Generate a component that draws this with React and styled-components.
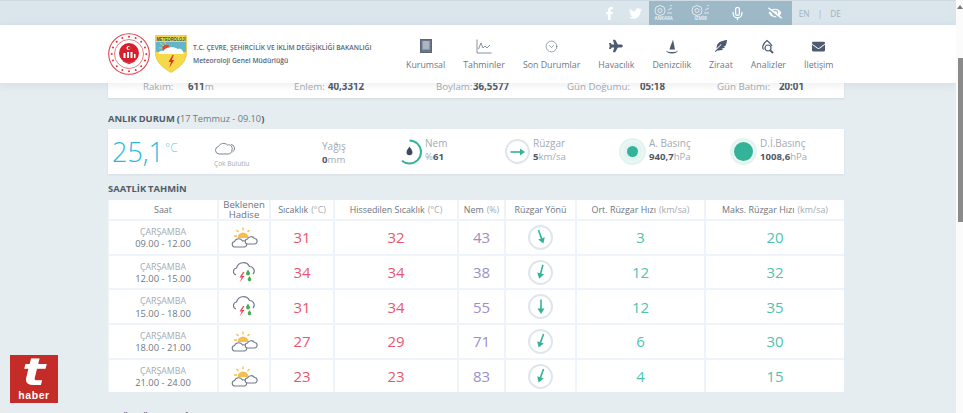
import React from "react";
import styled, { createGlobalStyle } from "styled-components";
import { FaFacebookF, FaTwitter, FaEyeSlash, FaPlane, FaEnvelope, FaFeatherAlt } from "react-icons/fa";
import { Mic, CircleChevronDown } from "lucide-react";

const GlobalStyle = createGlobalStyle`
    html, body {
        margin: 0;
        height: 413px;
        overflow: hidden;
        background: #e6edf1;
        font-family: "Open Sans", "Liberation Sans", sans-serif;
    }
    * { box-sizing: border-box; }
`;

const Page = styled.div`
    display: flex;
    width: 963px;
    height: 413px;
    overflow: hidden;
`;

const Main = styled.div`
    width: 956px;
    height: 413px;
    overflow: hidden;
`;

const ScrollTrack = styled.div`
    width: 7px;
    height: 413px;
    background: #fbfbfb;
    display: flex;
    flex-direction: column;
    align-items: flex-end;
    padding-top: 5px;
`;

const ScrollArrow = styled.div`
    width: 0;
    height: 0;
    border-left: 3px solid transparent;
    border-right: 3px solid transparent;
    border-bottom: 4px solid #777;
`;

const ScrollThumb = styled.div`
    width: 5px;
    height: 164px;
    margin-top: 49px;
    background: #8a8a8a;
`;

const TopBar = styled.div`
    height: 25px;
    background: #dae5ec;
    border-top: 1px solid #cfdbe3;
    display: flex;
    justify-content: flex-end;
    align-items: stretch;
    padding-right: 115px;
`;

const Socials = styled.div`
    display: flex;
    align-items: center;
    gap: 11px;
    margin-right: 6px;
    color: #fff;
    font-size: 13px;
`;

const SocialIcon = styled.span`
    width: 15px;
    display: flex;
    justify-content: center;
`;

const ToolBlock = styled.div`
    width: 143px;
    background: #9db8c7;
    display: flex;
    align-items: center;
    gap: 13px;
    padding: 0 5px 0 3px;
`;

const Tool = styled.div`
    width: 24px;
    display: flex;
    flex-direction: column;
    align-items: center;
    color: #fff;
    font-size: 14px;
`;

const CityName = styled.span`
    font-size: 4.5px;
    line-height: 5px;
    color: #f1f6f8;
    font-weight: 600;
`;

const Lang = styled.div`
    margin-left: 7px;
    display: flex;
    align-items: center;
    gap: 8px;
    font-size: 8.4px;
    color: #a3b2bb;
`;

const Header = styled.header`
    position: relative;
    z-index: 2;
    height: 58px;
    background: #fff;
    box-shadow: 0 2px 8px rgba(90, 110, 125, 0.12);
    display: flex;
    padding-left: 108px;
`;

const Logos = styled.div`
    width: 298px;
    display: flex;
    align-items: center;
    gap: 5px;
`;

const Brand = styled.div`
    margin-left: 1px;
    display: flex;
    flex-direction: column;
    gap: 4px;
    color: #5a6472;
    font-size: 6.7px;
    line-height: 9px;
    font-weight: 600;
    white-space: nowrap;
`;

const Nav = styled.nav`
    display: flex;
    gap: 18px;
`;

const NavItem = styled.div`
    display: flex;
    flex-direction: column;
    align-items: center;
    padding-top: 12px;
    color: #4d5a70;
    font-size: 18px;
`;

const NavIcon = styled.div`
    height: 18px;
    display: flex;
    align-items: center;
    justify-content: center;
`;

const NavLabel = styled.span`
    margin-top: 3px;
    font-size: 8.8px;
    line-height: 14px;
    color: #6e7884;
    white-space: nowrap;
`;

const Content = styled.main`
    width: 736px;
    margin-left: 108px;
`;

const InfoCard = styled.div`
    height: 25px;
    margin-top: -10px;
    padding: 9px 0 0 35px;
    background: #fff;
    box-shadow: 0 1px 2px rgba(120, 140, 155, 0.2);
    display: grid;
    grid-template-columns: 151px 142px 131px 150px auto;
    align-items: start;
`;

const InfoItem = styled.div`
    display: flex;
    font-size: 9.7px;
    line-height: 10px;
    color: #a3abb3;
    white-space: nowrap;
`;

const InfoLabel = styled.span`
    width: ${props => props.$width}px;
`;

const Strong = styled.b`
    font-weight: 700;
    color: #4f5965;
`;

const Heading = styled.h2`
    margin: ${props => props.$top}px 0 0;
    height: 12px;
    font-size: 9.4px;
    line-height: 12px;
    font-weight: 700;
    word-spacing: -0.5px;
    color: #4f5c6a;
    white-space: nowrap;
`;

const Faint = styled.span`
    font-size: 9.2px;
    font-weight: 400;
    word-spacing: 0;
    color: #6d7985;
`;

const NowCard = styled.section`
    height: 45px;
    margin-top: 4px;
    background: #fff;
    box-shadow: 0 1px 2px rgba(120, 140, 155, 0.15);
    display: grid;
    grid-template-columns: 102px 108px 75px 108px 114px 111px auto;
    padding-left: 4px;
    align-items: center;
`;

const TempBlock = styled.div`
    display: flex;
    align-items: flex-start;
    color: #2cb8da;
`;

const TempValue = styled.span`
    font-size: 27px;
    line-height: 32px;
    font-weight: 300;
`;

const TempUnit = styled.span`
    margin: 5px 0 0 1px;
    font-size: 12px;
    line-height: 14px;
    font-weight: 300;
    color: #6ccde3;
`;

const SkyBlock = styled.div`
    display: flex;
    flex-direction: column;
    align-items: flex-start;
    gap: 3px;
    padding-top: 7px;
`;

const SkyLabel = styled.span`
    font-size: 6.6px;
    line-height: 10px;
    color: #a3abb3;
    white-space: nowrap;
`;

const Stat = styled.div`
    display: flex;
    align-items: center;
    gap: 3px;
`;

const StatText = styled.div`
    display: flex;
    flex-direction: column;
    margin-top: ${props => props.$shift || -3}px;
    font-size: 9.6px;
    line-height: 13px;
    color: #a3abb3;
    white-space: nowrap;
`;

const StatName = styled.span`
    font-size: 10px;
`;

const Forecast = styled.div`
    margin-top: 5px;
    display: grid;
    grid-template-columns: 108px 50px 62px 122px 45px 69px 127px 1fr;
    grid-template-rows: 19px repeat(5, 32.7px);
    gap: 2px;
    padding-left: 1px;
    background: #eef4f9;
`;

const HeadCell = styled.div`
    background: #fff;
    display: flex;
    align-items: center;
    justify-content: center;
    text-align: center;
    font-size: ${props => props.$size || 8.9}px;
    line-height: 9.3px;
    color: #6b7580;
    white-space: nowrap;
`;

const Unit = styled.span`
    margin-left: 3px;
    color: #a3abb3;
`;

const Cell = styled.div`
    background: #fff;
    display: flex;
    flex-direction: column;
    align-items: center;
    justify-content: center;
    color: ${props => props.$color || "#6b7580"};
    font-size: 15px;
`;

const Day = styled.span`
    margin-top: 2px;
    font-size: 8.8px;
    line-height: 11.5px;
    color: #a3abb3;
`;

const Hours = styled.span`
    font-size: 9.4px;
    line-height: 11.5px;
    color: #6f7882;
`;

const Dial = styled.div`
    width: 25px;
    height: 25px;
    border: 2px solid #dfe6eb;
    border-radius: 50%;
    display: flex;
    align-items: center;
    justify-content: center;
`;

const Arrow = styled.svg`
    transform: rotate(${props => props.$deg}deg);
`;

const HaberBadge = styled.div`
    position: fixed;
    left: 10px;
    top: 355px;
    z-index: 3;
    width: 48px;
    height: 48px;
    background: #c42c27;
    display: flex;
    flex-direction: column;
    align-items: center;
    color: #fff;
`;

const HaberT = styled.span`
    height: 35px;
    font-family: "DejaVu Sans", sans-serif;
    font-size: 37px;
    line-height: 35px;
    font-weight: 700;
    font-style: italic;
    transform: scaleX(1.3);
`;

const HaberWord = styled.span`
    font-family: "Liberation Sans", sans-serif;
    font-size: 10.5px;
    line-height: 10px;
    font-weight: 700;
    letter-spacing: 0.6px;
`;

const RED = "#e9586f";
const PURPLE = "#9c8fc6";
const TEAL = "#4fc4ad";

const rows = [
    { hours: "09.00 - 12.00", icon: "sun", temp: 31, feel: 32, hum: 43, deg: -20, avg: 3, max: 20 },
    { hours: "12.00 - 15.00", icon: "storm", temp: 34, feel: 34, hum: 38, deg: 15, avg: 12, max: 32 },
    { hours: "15.00 - 18.00", icon: "storm", temp: 31, feel: 34, hum: 55, deg: 0, avg: 12, max: 35 },
    { hours: "18.00 - 21.00", icon: "sun", temp: 27, feel: 29, hum: 71, deg: 20, avg: 6, max: 30 },
    { hours: "21.00 - 24.00", icon: "sun", temp: 23, feel: 23, hum: 83, deg: 20, avg: 4, max: 15 },
];

const CityGear = () => (
    <svg width="21" height="11" viewBox="0 0 21 11" fill="none" stroke="#f1f6f8" strokeWidth="0.8">
        <path d="M3 2l4-1.500L11 2l1 3.500-1 3.500-4 1.500-4-1.500-1-3.500z" />
        <circle cx="7" cy="5.500" r="2" />
        <path d="M14 8h5M15 5l4-2M17 1l2-1" />
    </svg>
);

const BookIcon = () => (
    <svg width="12" height="14" viewBox="0 0 12 14">
        <rect x="0.500" y="0.500" width="11" height="13" fill="#6b7588" stroke="#5a6679" />
        <rect x="2.500" y="2" width="7" height="8.500" fill="#aeb5c0" />
    </svg>
);

const ChartIcon = () => (
    <svg width="16" height="15" viewBox="0 0 16 15" fill="none" stroke="#7a8494" strokeWidth="0.9">
        <path d="M1 0.500V14H15.500" />
        <path d="M2.500 10l2.500-6 2 5 2-2 2 2 3-3" />
    </svg>
);

const SailIcon = () => (
    <svg width="14" height="15" viewBox="0 0 14 15" fill="#4d5a70">
        <path d="M8 0.500C7.500 3 5.500 6 4.500 10.500H10z" />
        <path d="M1 11.500c1.500 1 3 1.500 6 1.500s4.500-.5 6-1.500c-.5 2-3 3-6 3s-5.500-1-6-3z" />
    </svg>
);

const AnalysisIcon = () => (
    <svg width="14" height="15" viewBox="0 0 14 15" fill="none" stroke="#4d5a70" strokeWidth="1.200">
        <path d="M2.500 10.500C1 9 1.500 5 6 1.500c2.500 2 4 3.500 5 5.500" />
        <circle cx="7" cy="9" r="3" />
        <path d="M9.300 11.300l2.700 2.700" strokeWidth="1.800" />
    </svg>
);

const Seal = () => (
    <svg width="42" height="42" viewBox="0 0 42 42">
        <circle cx="21" cy="21" r="20.300" fill="#fff" stroke="#e2424e" strokeWidth="1.100" />
        <circle cx="21" cy="21" r="14.500" fill="none" stroke="#ee7b82" strokeWidth="1" />
        {Array.from({ length: 16 }).map((_, i) => {
            const a = (i / 16) * Math.PI * 2;
            return <circle key={i} cx={21 + Math.cos(a) * 17.300} cy={21 + Math.sin(a) * 17.300} r="1" fill="#e2323f" />;
        })}
        <circle cx="21" cy="20" r="10" fill="#d81f2e" />
        <path d="M15 28l6 2.500 6-2.500" fill="none" stroke="#e2323f" strokeWidth="1.200" />
        <path d="M15.500 20h2v5h-2zM19 19h2v6h-2zM22.500 19h2v6h-2zM26 21h1.500v4H26z" fill="#fff" />
        <circle cx="20.500" cy="15" r="2" fill="#fff" />
        <circle cx="21.300" cy="15" r="1.500" fill="#d81f2e" />
    </svg>
);

const Shield = () => (
    <svg width="32" height="38" viewBox="0 0 32 38">
        <path d="M0.500 0.500H31.500V18C31.500 27 24 33 16 37.500 8 33 0.500 27 0.500 18z" fill="#f6d94a" stroke="#d9c033" strokeWidth="0.600" />
        <rect x="1" y="7" width="30" height="10" fill="#63b6c9" />
        <circle cx="11" cy="13" r="3.500" fill="#e7452c" />
        <path d="M5 8l4 3M9 6l2 4M4 13h3" stroke="#f6d94a" strokeWidth="0.800" />
        <path d="M3.500 19c0-3 3-4 5-3 1-4 11-5 14-2 3-1 6 1 6 5z" fill="#fff" />
        <path d="M17.500 20l-4 7h2.500l-1.800 6 5-8h-2.500l2-5z" fill="#e2332b" />
        <text x="16" y="5.600" textAnchor="middle" textLength="29" lengthAdjust="spacingAndGlyphs" fontFamily="Liberation Sans" fontSize="5.200" fontWeight="700" fill="#1e4d6a">METEOROLOJİ</text>
    </svg>
);

const CloudOutline = () => (
    <svg width="24" height="15" viewBox="0 0 24 15" fill="none" stroke="#7c8694" strokeWidth="1">
        <path d="M17 3.500a4 4 0 0 1 1.500 7.500" />
        <path d="M5 13a3.800 3.800 0 0 1-.5-7.500C6 2 11 1.500 13.500 4c3-1 5.500 2 4.500 5 0 2.500-2 4-4 4z" />
    </svg>
);

const SunCloud = () => (
    <svg width="27" height="21" viewBox="0 0 27 21">
        <g stroke="#f4bd4e" strokeWidth="1.300">
            <path d="M12 0.500v3M5.500 3l2 2M18.500 3l-2 2M3 9h3" />
        </g>
        <path d="M6.500 11a5.500 5.500 0 0 1 11 0z" fill="#f5bf50" />
        <path d="M3.500 20a2.800 2.800 0 0 1 0-5.500 4.500 4.500 0 0 1 8-.5 3.100 3.100 0 0 1 2 6z" fill="#fff" stroke="#6f7a8b" strokeWidth="1.100" />
        <path d="M17 17a2.500 2.500 0 0 1-.5-5 4 4 0 0 1 7-.5 2.800 2.800 0 0 1 .5 5.500z" fill="#fff" stroke="#6f7a8b" strokeWidth="1.100" />
    </svg>
);

const StormCloud = () => (
    <svg width="22" height="21" viewBox="0 0 22 21">
        <path d="M3 13A3.600 3.600 0 0 1 3.500 6 7 7 0 0 1 16.500 4.500 4.500 4.500 0 0 1 20 12" fill="none" stroke="#6f7a8b" strokeWidth="1.200" />
        <path d="M10 10l-3.500 5.500h2.300L6.500 20.500l5-6.500H9l2.500-4z" fill="#e9495d" />
        <path d="M15 7.500c-1 2-2 2.800-2 4a2 2 0 0 0 4 0c0-1.200-1-2-2-4z" fill="#45ad53" />
        <path d="M16.500 14c-1 1.800-1.800 2.500-1.800 3.600a1.800 1.800 0 0 0 3.600 0c0-1.100-.8-1.800-1.800-3.600z" fill="#45ad53" />
    </svg>
);

const HumidityGauge = () => (
    <svg width="25" height="26" viewBox="0 0 25 26">
        <circle
            cx="12.500"
            cy="13"
            r="11.500"
            fill="none"
            stroke="#35b29a"
            strokeWidth="2"
            strokeDasharray="44 72.300"
            transform="rotate(-90 12.500 13)"
        />
        <path d="M12.500 7.500c-1.500 2.500-3 3.800-3 5.800a3 3 0 0 0 6 0c0-2-1.500-3.300-3-5.800z" fill="#3e4a5c" />
    </svg>
);

const WindDial = () => (
    <Dial>
        <svg width="16" height="10" viewBox="0 0 16 10">
            <path d="M0.500 5H11" stroke="#35b29a" strokeWidth="1.600" />
            <path d="M10 1.500l5 3.500-5 3.500z" fill="#35b29a" />
        </svg>
    </Dial>
);

const PressureDial = ({ radius }) => (
    <svg width="27" height="27" viewBox="0 0 27 27">
        <circle cx="13.500" cy="13.500" r="13.500" fill="#e3f4f0" />
        <circle cx="13.500" cy="13.500" r="10.500" fill="none" stroke="#f3fbf9" strokeWidth="1" />
        <circle cx="13.500" cy="13.500" r={radius} fill="#35b29a" />
    </svg>
);

const App = () => {
    return (
        <Page>
            <GlobalStyle />
            <Main>
                <TopBar>
                    <Socials>
                        <SocialIcon><FaFacebookF /></SocialIcon>
                        <SocialIcon><FaTwitter /></SocialIcon>
                    </Socials>
                    <ToolBlock>
                        <Tool><CityGear /><CityName>ANKARA</CityName></Tool>
                        <Tool><CityGear /><CityName>İZMİR</CityName></Tool>
                        <Tool><Mic size={15} /></Tool>
                        <Tool><FaEyeSlash /></Tool>
                    </ToolBlock>
                    <Lang>
                        <span>EN</span>
                        <span>|</span>
                        <span>DE</span>
                    </Lang>
                </TopBar>
                <Header>
                    <Logos>
                        <Seal />
                        <Shield />
                        <Brand>
                            <span>T.C. ÇEVRE, ŞEHİRCİLİK VE İKLİM DEĞİŞİKLİĞİ BAKANLIĞI</span>
                            <span>Meteoroloji Genel Müdürlüğü</span>
                        </Brand>
                    </Logos>
                    <Nav>
                        <NavItem><NavIcon><BookIcon /></NavIcon><NavLabel>Kurumsal</NavLabel></NavItem>
                        <NavItem><NavIcon><ChartIcon /></NavIcon><NavLabel>Tahminler</NavLabel></NavItem>
                        <NavItem><NavIcon><CircleChevronDown size={13} strokeWidth={1} /></NavIcon><NavLabel>Son Durumlar</NavLabel></NavItem>
                        <NavItem><NavIcon><FaPlane size={14} /></NavIcon><NavLabel>Havacılık</NavLabel></NavItem>
                        <NavItem><NavIcon><SailIcon /></NavIcon><NavLabel>Denizcilik</NavLabel></NavItem>
                        <NavItem><NavIcon><FaFeatherAlt size={12} /></NavIcon><NavLabel>Ziraat</NavLabel></NavItem>
                        <NavItem><NavIcon><AnalysisIcon /></NavIcon><NavLabel>Analizler</NavLabel></NavItem>
                        <NavItem><NavIcon><FaEnvelope size={13} /></NavIcon><NavLabel>İletişim</NavLabel></NavItem>
                    </Nav>
                </Header>
                <Content>
                    <InfoCard>
                        <InfoItem><InfoLabel $width={45}>Rakım:</InfoLabel><span><Strong>611</Strong>m</span></InfoItem>
                        <InfoItem><InfoLabel $width={34}>Enlem:</InfoLabel><Strong>40,3312</Strong></InfoItem>
                        <InfoItem><InfoLabel $width={37}>Boylam:</InfoLabel><Strong>36,5577</Strong></InfoItem>
                        <InfoItem><InfoLabel $width={73}>Gün Doğumu:</InfoLabel><Strong>05:18</Strong></InfoItem>
                        <InfoItem><InfoLabel $width={62}>Gün Batımı:</InfoLabel><Strong>20:01</Strong></InfoItem>
                    </InfoCard>

                    <Heading $top={15}>ANLIK DURUM (<Faint>17 Temmuz - 09.10</Faint>)</Heading>
                    <NowCard>
                        <TempBlock><TempValue>25,1</TempValue><TempUnit>°C</TempUnit></TempBlock>
                        <SkyBlock><CloudOutline /><SkyLabel>Çok Bulutlu</SkyLabel></SkyBlock>
                        <StatText $shift={2}><StatName>Yağış</StatName><span><Strong>0</Strong>mm</span></StatText>
                        <Stat>
                            <HumidityGauge />
                            <StatText><StatName>Nem</StatName><span>%<Strong>61</Strong></span></StatText>
                        </Stat>
                        <Stat>
                            <WindDial />
                            <StatText><StatName>Rüzgar</StatName><span><Strong>5</Strong>km/sa</span></StatText>
                        </Stat>
                        <Stat>
                            <PressureDial radius={5.500} />
                            <StatText><StatName>A. Basınç</StatName><span><Strong>940,7</Strong>hPa</span></StatText>
                        </Stat>
                        <Stat>
                            <PressureDial radius={9.500} />
                            <StatText><StatName>D.İ.Basınç</StatName><span><Strong>1008,6</Strong>hPa</span></StatText>
                        </Stat>
                    </NowCard>

                    <Heading $top={9}>SAATLİK TAHMİN</Heading>
                    <Forecast>
                        <HeadCell>Saat</HeadCell>
                        <HeadCell $size={9.6}>Beklenen<br />Hadise</HeadCell>
                        <HeadCell>Sıcaklık<Unit>(°C)</Unit></HeadCell>
                        <HeadCell>Hissedilen Sıcaklık<Unit>(°C)</Unit></HeadCell>
                        <HeadCell>Nem<Unit>(%)</Unit></HeadCell>
                        <HeadCell>Rüzgar Yönü</HeadCell>
                        <HeadCell>Ort. Rüzgar Hızı<Unit>(km/sa)</Unit></HeadCell>
                        <HeadCell>Maks. Rüzgar Hızı<Unit>(km/sa)</Unit></HeadCell>
                        {rows.map(row => (
                            <React.Fragment key={row.hours}>
                                <Cell><Day>ÇARŞAMBA</Day><Hours>{row.hours}</Hours></Cell>
                                <Cell>{row.icon === "sun" ? <SunCloud /> : <StormCloud />}</Cell>
                                <Cell $color={RED}>{row.temp}</Cell>
                                <Cell $color={RED}>{row.feel}</Cell>
                                <Cell $color={PURPLE}>{row.hum}</Cell>
                                <Cell>
                                    <Dial>
                                        <Arrow $deg={row.deg} width="8" height="16" viewBox="0 0 8 16">
                                            <path d="M4 0.500V10" stroke="#35b29a" strokeWidth="1.600" />
                                            <path d="M0.500 9.500L4 15l3.500-5.500z" fill="#35b29a" />
                                        </Arrow>
                                    </Dial>
                                </Cell>
                                <Cell $color={TEAL}>{row.avg}</Cell>
                                <Cell $color={TEAL}>{row.max}</Cell>
                            </React.Fragment>
                        ))}
                    </Forecast>
                    <Heading $top={19}>5 GÜNLÜK TAHMİN</Heading>
                </Content>
            </Main>
            <ScrollTrack>
                <ScrollArrow />
                <ScrollThumb />
            </ScrollTrack>
            <HaberBadge>
                <HaberT>t</HaberT>
                <HaberWord>haber</HaberWord>
            </HaberBadge>
        </Page>
    );
};

export default App;
